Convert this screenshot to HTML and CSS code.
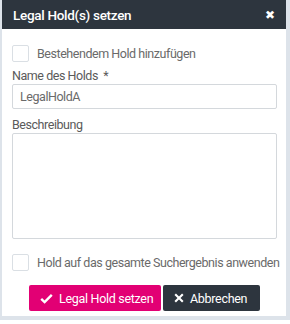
FILE: index.html
```html
<!DOCTYPE html>
<html lang="de">
<head>
    <meta charset="UTF-8">
    <title>Legal Hold(s) setzen</title>
    <link rel="stylesheet" href="styles.css">
</head>
<body>
    <div class="dialog">
        <div class="dialog-header">
            <span class="dialog-title">Legal Hold(s) setzen</span>
            <span class="close">&#10006;</span>
        </div>
        <div class="dialog-body">
            <label class="check-row">
                <span class="checkbox"></span>
                <span>Bestehendem Hold hinzufügen</span>
            </label>
            <div class="field">
                <label class="field-label">Name des Holds &nbsp;*</label>
                <div class="input">LegalHoldA</div>
            </div>
            <div class="field">
                <label class="field-label">Beschreibung</label>
                <div class="textarea"></div>
            </div>
            <label class="check-row check-bottom">
                <span class="checkbox"></span>
                <span>Hold auf das gesamte Suchergebnis anwenden</span>
            </label>
            <div class="buttons">
                <button class="btn btn-primary">
                    <svg width="13" height="11" viewBox="0 0 13 11"><path d="M1.2 5.8 L4.6 9 L11.8 1.8" fill="none" stroke="#fff" stroke-width="2.4"/></svg>
                    Legal Hold setzen
                </button>
                <button class="btn btn-dark">
                    <svg width="10" height="10" viewBox="0 0 10 10"><path d="M1.2 1.2 L8.8 8.8 M8.8 1.2 L1.2 8.8" fill="none" stroke="#fff" stroke-width="2.1"/></svg>
                    Abbrechen
                </button>
            </div>
        </div>
    </div>
</body>
</html>
```
FILE: styles.css
```css
body {
    margin: 0;
    font-family: Roboto, "Liberation Sans", sans-serif;
    background: #fff;
}
.dialog {
    width: 284px;
    height: 316px;
    border-left: 2px solid #dde3ea;
    border-right: 4px solid #dde3ea;
    border-bottom: 4px solid #dde3ea;
    background: #fff;
}
.dialog-header {
    height: 29px;
    background: #2d353e;
    color: #fff;
    display: flex;
    align-items: center;
    justify-content: space-between;
    padding: 0 11px;
}
.dialog-title {
    font-size: 13.5px;
    font-weight: 500;
    letter-spacing: -0.3px;
}
.close {
    font-size: 12px;
}
.dialog-body {
    padding: 16px 9px 0 10px;
    color: #6a6a6a;
    font-size: 12.5px;
    letter-spacing: -0.45px;
    line-height: 15px;
}
.check-row {
    display: flex;
    align-items: center;
    gap: 8px;
    height: 17px;
    white-space: nowrap;
}
.checkbox {
    flex: none;
    width: 15px;
    height: 15px;
    border: 1px solid #dadfe4;
    border-radius: 2px;
}
.field {
    margin-top: 6px;
}
.field-label {
    display: block;
    margin-bottom: 1px;
    color: #5a5a5a;
}
.input {
    height: 23px;
    border: 1px solid #d4d8dc;
    border-radius: 2px;
    padding: 0 7px;
    line-height: 23px;
}
.field + .field {
    margin-top: 8px;
}
.textarea {
    height: 104px;
    border: 1px solid #d4d8dc;
    border-radius: 2px;
}
.check-bottom {
    margin-top: 15px;
}
.buttons {
    display: flex;
    justify-content: center;
    gap: 2px;
    margin-top: 14px;
}
.btn {
    height: 26px;
    border: none;
    border-radius: 2px;
    color: #fff;
    font-family: inherit;
    font-size: 12.5px;
    letter-spacing: -0.3px;
    white-space: nowrap;
    display: flex;
    align-items: center;
    gap: 6px;
    padding: 0 0 0 11px;
}
.btn-primary {
    background: #e20074;
    width: 132px;
}
.btn-dark {
    background: #2d353e;
    width: 97px;
}
```
